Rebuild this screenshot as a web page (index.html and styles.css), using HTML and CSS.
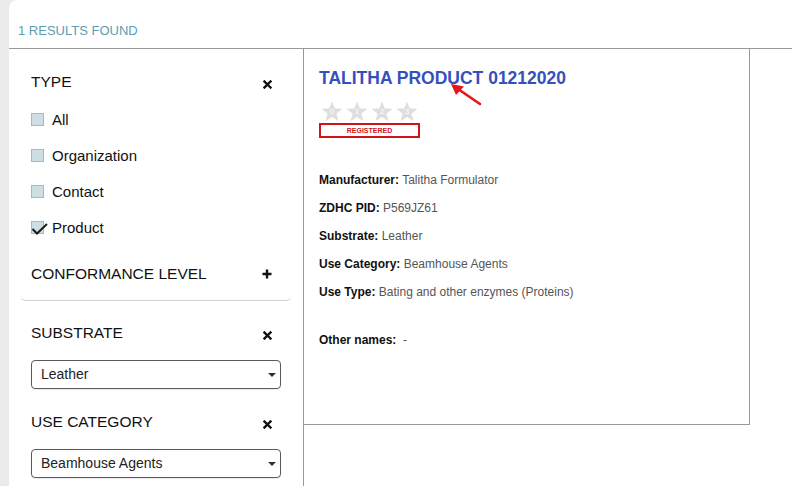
FILE: index.html
```html
<!DOCTYPE html>
<html>

<head>
    <meta charset="UTF-8">
    <title>Product search</title>
    <link rel="stylesheet" href="styles.css">
</head>

<body>
    <div class="panel">
        <div class="results-bar">1 RESULTS FOUND</div>

        <div class="results-body">
            <aside class="sidebar">
                <div class="filter-box">
                    <div class="filter-head">
                        <span>TYPE</span>
                        <svg class="icon" width="9" height="9" viewBox="0 0 9 9"><path d="M1.5 1.5 L7.5 7.5 M7.5 1.5 L1.5 7.5" stroke="#111" stroke-width="2.4" stroke-linecap="square"/></svg>
                    </div>
                    <label class="option"><span class="box"></span>All</label>
                    <label class="option"><span class="box"></span>Organization</label>
                    <label class="option"><span class="box"></span>Contact</label>
                    <label class="option">
                        <span class="box">
                            <svg class="tick" width="18" height="14" viewBox="0 0 18 14"><path d="M1.5 7 L6 11.5 L16 2" fill="none" stroke="#1d1d1d" stroke-width="2"/></svg>
                        </span>Product
                    </label>
                    <div class="filter-head conformance">
                        <span>CONFORMANCE LEVEL</span>
                        <svg class="icon" width="10" height="10" viewBox="0 0 10 10"><path d="M5 0.5 V9.5 M0.5 5 H9.5" stroke="#111" stroke-width="2.4"/></svg>
                    </div>
                </div>

                <div class="filter-group">
                    <div class="filter-head">
                        <span>SUBSTRATE</span>
                        <svg class="icon" width="9" height="9" viewBox="0 0 9 9"><path d="M1.5 1.5 L7.5 7.5 M7.5 1.5 L1.5 7.5" stroke="#111" stroke-width="2.4" stroke-linecap="square"/></svg>
                    </div>
                    <div class="select">Leather<span class="caret"></span></div>
                </div>

                <div class="filter-group">
                    <div class="filter-head">
                        <span>USE CATEGORY</span>
                        <svg class="icon" width="9" height="9" viewBox="0 0 9 9"><path d="M1.5 1.5 L7.5 7.5 M7.5 1.5 L1.5 7.5" stroke="#111" stroke-width="2.4" stroke-linecap="square"/></svg>
                    </div>
                    <div class="select">Beamhouse Agents<span class="caret"></span></div>
                </div>
            </aside>

            <div class="result-card">
                <h2 class="product-title">TALITHA PRODUCT 01212020</h2>

                <div class="stars">
                    <span class="star"><svg width="22" height="21" viewBox="0 0 24 23"><path d="M12 0.5 L15 8.2 L23.5 8.6 L16.8 13.9 L19.2 22.3 L12 17.5 L4.8 22.3 L7.2 13.9 L0.5 8.6 L9 8.2 Z" fill="#dedede"/></svg><span class="num">0</span></span>
                    <span class="star"><svg width="22" height="21" viewBox="0 0 24 23"><path d="M12 0.5 L15 8.2 L23.5 8.6 L16.8 13.9 L19.2 22.3 L12 17.5 L4.8 22.3 L7.2 13.9 L0.5 8.6 L9 8.2 Z" fill="#dedede"/></svg><span class="num">1</span></span>
                    <span class="star"><svg width="22" height="21" viewBox="0 0 24 23"><path d="M12 0.5 L15 8.2 L23.5 8.6 L16.8 13.9 L19.2 22.3 L12 17.5 L4.8 22.3 L7.2 13.9 L0.5 8.6 L9 8.2 Z" fill="#dedede"/></svg><span class="num">2</span></span>
                    <span class="star"><svg width="22" height="21" viewBox="0 0 24 23"><path d="M12 0.5 L15 8.2 L23.5 8.6 L16.8 13.9 L19.2 22.3 L12 17.5 L4.8 22.3 L7.2 13.9 L0.5 8.6 L9 8.2 Z" fill="#dedede"/></svg><span class="num">3</span></span>
                </div>
                <div class="badge">REGISTERED</div>

                <div class="details">
                    <p><b>Manufacturer:</b> Talitha Formulator</p>
                    <p><b>ZDHC PID:</b> P569JZ61</p>
                    <p><b>Substrate:</b> Leather</p>
                    <p><b>Use Category:</b> Beamhouse Agents</p>
                    <p><b>Use Type:</b> Bating and other enzymes (Proteins)</p>
                    <p class="other"><b>Other names:</b>&nbsp; -</p>
                </div>

                <!-- annotation arrow -->
                <svg class="arrow" width="36" height="28" viewBox="0 0 36 28">
                    <path d="M31 22 L9 7" stroke="#e8141b" stroke-width="2.6" stroke-linecap="round"/>
                    <path d="M2 2 L15 4.5 L7 13 Z" fill="#e8141b"/>
                </svg>
            </div>
        </div>
    </div>
</body>

</html>
```

FILE: styles.css
```css
body {
    margin: 0;
    background: #ebebeb;
    font-family: "Liberation Sans", Arial, sans-serif;
    color: #1b1b1b;
}

.panel {
    margin-left: 9px;
    height: 486px;
    background: #fff;
    border-top-left-radius: 8px;
    overflow: hidden;
}

.results-bar {
    height: 49px;
    box-sizing: border-box;
    padding: 23px 0 0 9px;
    font-size: 13px;
    line-height: 16px;
    color: #5d9db2;
    border-bottom: 1px solid #999;
}

.results-body {
    display: flex;
    align-items: flex-start;
}

.sidebar {
    width: 295px;
    height: 437px;
    box-sizing: border-box;
    padding: 0 11px;
    border-right: 1px solid #999;
}

.filter-box {
    padding: 23px 11px 16px;
    border-bottom: 1px solid #d4d4d4;
    border-radius: 0 0 6px 6px;
}

.filter-group {
    padding: 22px 11px 0;
}

.filter-group + .filter-group {
    padding-top: 23px;
}

.filter-head {
    display: flex;
    justify-content: space-between;
    align-items: center;
    height: 20px;
    padding-right: 9px;
    font-size: 15.5px;
    color: #111;
}

.filter-head .icon {
    margin-top: 5px;
}

.filter-head.conformance {
    margin-top: 27px;
}

.filter-head.conformance .icon {
    margin-top: 0;
}

.option {
    display: flex;
    align-items: center;
    height: 20px;
    margin-top: 16px;
    font-size: 15px;
    color: #111;
}

.option:first-of-type {
    margin-top: 17px;
}

.box {
    position: relative;
    width: 13px;
    height: 13px;
    box-sizing: border-box;
    margin-right: 8px;
    background: #cfdee5;
    border: 1px solid #a7b7be;
}

.tick {
    position: absolute;
    left: -1px;
    top: 0;
}

.select {
    position: relative;
    height: 29px;
    box-sizing: border-box;
    margin-top: 17px;
    padding: 0 9px;
    border: 1px solid #5a5a5a;
    border-radius: 4px;
    font-size: 14px;
    line-height: 27px;
    color: #222;
    box-shadow: 0 1px 1px rgba(0, 0, 0, 0.08);
}

.caret {
    position: absolute;
    right: 4px;
    top: 12px;
    border-left: 4px solid transparent;
    border-right: 4px solid transparent;
    border-top: 4px solid #333;
}

.result-card {
    position: relative;
    width: 446px;
    height: 376px;
    box-sizing: border-box;
    padding: 19px 15px 0;
    border-right: 1px solid #999;
    border-bottom: 1px solid #999;
}

.product-title {
    margin: 0;
    font-size: 17.5px;
    line-height: 20px;
    font-weight: bold;
    color: #3550bd;
}

.stars {
    display: flex;
    gap: 3px;
    margin-top: 13px;
    padding-left: 2px;
}

.star {
    position: relative;
    width: 22px;
    height: 21px;
}

.star .num {
    position: absolute;
    left: 0;
    right: 0;
    top: 6px;
    text-align: center;
    font-size: 8px;
    line-height: 9px;
    color: #fff;
}

.badge {
    width: 101px;
    height: 15px;
    box-sizing: border-box;
    margin-top: 1px;
    border: 2px solid #d0121a;
    font-size: 7px;
    line-height: 11px;
    font-weight: bold;
    text-align: center;
    color: #d0121a;
}

.details {
    margin-top: 35px;
}

.details p {
    margin: 0 0 14px;
    font-size: 12px;
    line-height: 14px;
    color: #555;
}

.details b {
    color: #111;
}

.details .other {
    margin-top: 34px;
}

.arrow {
    position: absolute;
    left: 145px;
    top: 33px;
}
```
